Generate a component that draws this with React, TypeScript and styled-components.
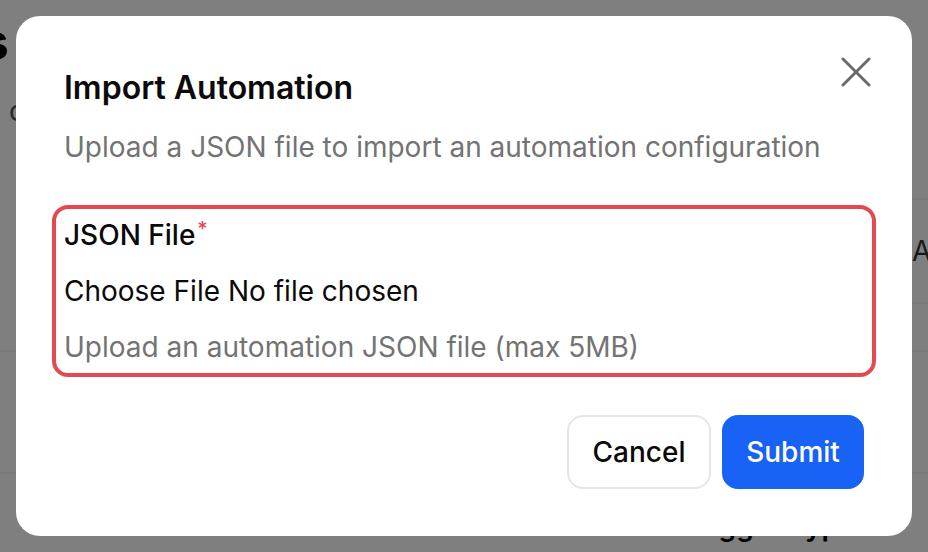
import styled, { createGlobalStyle } from "styled-components";

const GlobalStyle = createGlobalStyle`
  html, body {
    margin: 0;
    padding: 0;
    width: 100%;
    height: 100%;
    overflow: hidden;
    font-family: Inter, "Noto Sans", "Liberation Sans", sans-serif;
    -webkit-font-smoothing: antialiased;
  }
`;

// page behind the dialog, mostly hidden
const BgPage = styled.div`
  position: fixed;
  inset: 0;
  background: #ffffff;
  overflow: hidden;
`;

const BgHeader = styled.header`
  margin-left: -400px;
  padding-top: 14px;
`;

const BgTitle = styled.h1`
  margin: 0;
  width: 409px;
  text-align: right;
  font-size: 52px;
  line-height: 56px;
  font-weight: 700;
  color: #000;
`;

const BgSubtitle = styled.p`
  margin: 23px 0 0;
  width: 422px;
  text-align: right;
  white-space: nowrap;
  font-size: 28px;
  line-height: 36px;
  color: #555;
`;

const BgCard = styled.div`
  margin: 69px 0 0 700px;
`;

const BgRow = styled.div<{ $h: number }>`
  height: ${(p) => p.$h}px;
  border-top: 2px solid #eeeeee;
  display: flex;
  align-items: center;
  padding-left: 212px;
  font-size: 28px;
  color: #333;
  white-space: nowrap;
`;

const BgTable = styled.div``;

const BgTableRow = styled.div<{ $h: number }>`
  height: ${(p) => p.$h}px;
  border-top: 2px solid #eeeeee;
  display: flex;
  align-items: flex-end;
  padding-left: 683px;
  font-size: 28px;
  line-height: 36px;
  font-weight: 600;
  color: #000;
  white-space: nowrap;
`;

const Overlay = styled.div`
  position: fixed;
  inset: 0;
  background: rgba(0, 0, 0, 0.5);
  display: flex;
  align-items: center;
  justify-content: center;
`;

const Dialog = styled.div`
  position: relative;
  box-sizing: border-box;
  width: 896px;
  height: 520px;
  background: #ffffff;
  border-radius: 24px;
  padding: 54px 48px 47px;
  display: flex;
  flex-direction: column;
  color: #0a0a0a;
`;

const CloseButton = styled.button`
  position: absolute;
  top: 32px;
  right: 32px;
  width: 48px;
  height: 48px;
  border: none;
  background: transparent;
  padding: 0;
  display: flex;
  align-items: center;
  justify-content: center;
  cursor: pointer;
  color: #6b6b6b;
`;

const Title = styled.h2`
  margin: 0;
  font-size: 32px;
  line-height: 36px;
  font-weight: 600;
`;

const Description = styled.p`
  margin: 23px 0 0;
  font-size: 28px;
  line-height: 36px;
  color: #737373;
`;

const Field = styled.div`
  margin: 40px -12px 0;
  padding: 8px;
  border: 4px solid #e5484d;
  border-radius: 16px;
  display: flex;
  flex-direction: column;
  gap: 20px;
`;

const Label = styled.label`
  font-size: 28px;
  line-height: 36px;
  font-weight: 500;
`;

const Required = styled.span`
  color: #e5484d;
  font-size: 20px;
  vertical-align: top;
  position: relative;
  top: -6px;
  margin-left: 2px;
`;

const FilePicker = styled.label`
  font-size: 28px;
  line-height: 36px;
  display: flex;
  gap: 8px;
  cursor: pointer;

  input {
    display: none;
  }
`;

const Help = styled.p`
  margin: 0;
  font-size: 28px;
  line-height: 36px;
  color: #737373;
`;

const Footer = styled.div`
  margin-top: auto;
  display: flex;
  justify-content: flex-end;
  gap: 11px;
`;

const Button = styled.button<{ $primary?: boolean }>`
  box-sizing: border-box;
  height: 74px;
  width: ${(p) => (p.$primary ? "142px" : "144px")};
  padding: 0;
  border-radius: 16px;
  font-family: inherit;
  font-size: 28px;
  font-weight: 500;
  cursor: pointer;
  border: 2px solid ${(p) => (p.$primary ? "#1862f6" : "#e6e6e6")};
  background: ${(p) => (p.$primary ? "#1862f6" : "#ffffff")};
  color: ${(p) => (p.$primary ? "#ffffff" : "#0a0a0a")};
`;

function CloseIcon() {
  return (
    <svg width="30" height="30" viewBox="0 0 30 30" fill="none">
      <path
        d="M2 2 L28 28 M28 2 L2 28"
        stroke="currentColor"
        strokeWidth="3"
        strokeLinecap="round"
      />
    </svg>
  );
}

export default function App() {
  return (
    <>
      <GlobalStyle />
      <BgPage>
        <BgHeader>
          <BgTitle>Automations</BgTitle>
          <BgSubtitle>Manage your automations and connect</BgSubtitle>
        </BgHeader>
        <BgCard>
          <BgRow $h={102}>Actions</BgRow>
          <BgRow $h={46} />
        </BgCard>
        <BgTable>
          <BgTableRow $h={120} />
          <BgTableRow $h={70}>Trigger Type</BgTableRow>
        </BgTable>
      </BgPage>
      <Overlay>
        <Dialog role="dialog">
          <CloseButton aria-label="Close">
            <CloseIcon />
          </CloseButton>
          <Title>Import Automation</Title>
          <Description>
            Upload a JSON file to import an automation configuration
          </Description>
          <Field>
            <Label htmlFor="json-file">
              JSON File<Required>*</Required>
            </Label>
            <FilePicker>
              <input id="json-file" type="file" accept=".json" />
              <span>Choose File</span>
              <span>No file chosen</span>
            </FilePicker>
            <Help>Upload an automation JSON file (max 5MB)</Help>
          </Field>
          <Footer>
            <Button>Cancel</Button>
            <Button $primary>Submit</Button>
          </Footer>
        </Dialog>
      </Overlay>
    </>
  );
}
